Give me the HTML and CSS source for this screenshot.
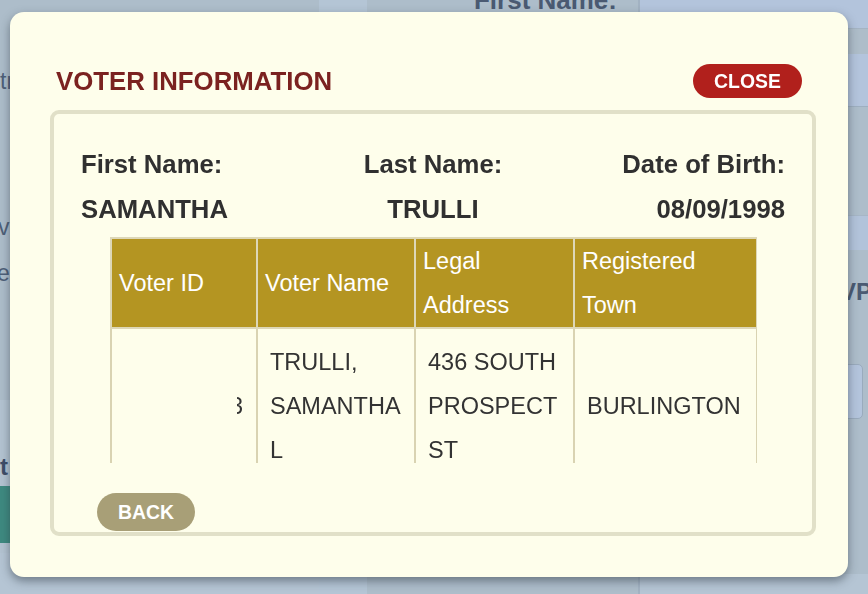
FILE: index.html
```html
<!DOCTYPE html>
<html lang="en">
<head>
<meta charset="utf-8">
<title>Voter Information</title>
<link rel="stylesheet" href="styles.css">
</head>
<body>
<div class="page">
  <div class="col col-a">
    <div class="a-top">
      <p class="bg-text t1">tr</p>
      <p class="bg-text t2">vi</p>
      <p class="bg-text t3">e</p>
    </div>
    <div class="a-band">
      <p class="bg-bold">t</p>
      <div class="teal"></div>
    </div>
    <div class="a-bottom"></div>
  </div>
  <div class="col col-b"></div>
  <div class="col col-c">
    <p class="bg-head">First Name:</p>
  </div>
  <div class="col col-d"></div>
  <div class="col col-e">
    <div class="e1"></div>
    <div class="e2"></div>
    <div class="e3"></div>
    <div class="e4"></div>
    <div class="e5"></div>
    <div class="e6"><span class="bg-bold-r">VP</span></div>
    <div class="e7"></div>
    <div class="e8"></div>
    <div class="e9"></div>
  </div>
</div>

<div class="modal">
  <div class="modal-head">
    <h1 class="modal-title">VOTER INFORMATION</h1>
    <button class="btn btn-close">CLOSE</button>
  </div>
  <div class="panel">
    <div class="info">
      <div class="lbl left">First Name:</div>
      <div class="lbl mid">Last Name:</div>
      <div class="lbl right">Date of Birth:</div>
      <div class="lbl left">SAMANTHA</div>
      <div class="lbl mid">TRULLI</div>
      <div class="lbl right">08/09/1998</div>
    </div>
    <div class="table-wrap">
      <table class="voters">
        <colgroup>
          <col class="c1"><col class="c2"><col class="c3"><col class="c4">
        </colgroup>
        <thead>
          <tr>
            <th>Voter ID</th>
            <th>Voter Name</th>
            <th>Legal<br>Address</th>
            <th>Registered<br>Town</th>
          </tr>
        </thead>
        <tbody>
          <tr>
            <td class="id"><span class="vid">3</span></td>
            <td>TRULLI,<br>SAMANTHA<br>L</td>
            <td>436 SOUTH<br>PROSPECT<br>ST</td>
            <td>BURLINGTON</td>
          </tr>
        </tbody>
      </table>
    </div>
    <button class="btn btn-back">BACK</button>
  </div>
</div>
</body>
</html>
```

FILE: styles.css
```css
html, body {
  margin: 0;
  padding: 0;
  width: 868px;
  height: 594px;
  overflow: hidden;
  font-family: "Liberation Sans", Arial, sans-serif;
}

/* ---------- background page ---------- */
.page {
  display: flex;
  width: 868px;
  height: 594px;
  background: #adbdca;
}
.col { height: 594px; overflow: hidden; }
.col-a { width: 319px; display: flex; flex-direction: column; }
.col-b { width: 48px; background: #b4c5d5; }
.col-c { width: 271px; }
.col-d { width: 2px; background: #a2b2c2; }
.col-e { flex: 1; display: flex; flex-direction: column; }

.a-top { height: 400px; }
.bg-text {
  margin: 0;
  font-size: 23px;
  line-height: 26px;
  color: #4e5f78;
  white-space: nowrap;
}
.t1 { margin-top: 68px; }
.t2 { margin-top: 120px; margin-left: -2px; }
.t3 { margin-top: 20px; margin-left: -3px; }

.a-band {
  height: 153px;
  background: #b3c3d1;
  display: flex;
  flex-direction: column;
}
.bg-bold {
  margin: 52px 0 0 0;
  font-size: 24px;
  font-weight: bold;
  line-height: 30px;
  color: #3e4d68;
}
.teal { height: 57px; margin-top: 4px; background: #3e8a80; }
.a-bottom { flex: 1; background: #b5c5d4; }

.bg-head {
  margin: -15px 21px 0 0;
  text-align: right;
  font-size: 26px;
  font-weight: bold;
  line-height: 30px;
  color: #4a5a72;
}

.e1 { height: 28px; background: #b3c4dc; }
.e2 { height: 25px; background: #aebdc9; border-top: 1px solid #a5b4c3; }
.e3 { height: 52px; background: #b3c4dc; }
.e4 { height: 108px; background: #adbdca; border-top: 1px solid #9eafc0; }
.e5 { height: 34px; background: #b2c3da; border-top: 1px solid #a6b6c6; }
.e6 {
  height: 114px;
  background: #adbdca;
  display: flex;
  justify-content: flex-end;
  align-items: flex-start;
}
.bg-bold-r {
  margin-top: 27px;
  margin-right: -4px;
  font-size: 24px;
  font-weight: bold;
  line-height: 30px;
  color: #4a5a72;
}
.e7 {
  height: 53px;
  margin-right: 5px;
  background: #b3c4dc;
  border: 1px solid #9aabbd;
  border-radius: 5px;
}
.e8 { height: 155px; }
.e9 { flex: 1; background: #b5c5d4; }

/* ---------- modal ---------- */
.modal {
  position: fixed;
  left: 10px;
  top: 12px;
  width: 838px;
  height: 565px;
  box-sizing: border-box;
  padding: 52px 32px 0 40px;
  background: #fefeeb;
  border-radius: 14px;
  box-shadow: 0 4px 10px rgba(40, 50, 60, 0.5);
  display: flex;
  flex-direction: column;
}
.modal-head {
  display: flex;
  justify-content: space-between;
  align-items: center;
  height: 34px;
  margin: 0 14px 12px 6px;
}
.modal-title {
  margin: 0;
  font-size: 25.8px;
  font-weight: bold;
  color: #7b2220;
  line-height: 30px;
}
.btn {
  border: none;
  border-radius: 20px;
  color: #ffffff;
  font-family: "Liberation Sans", Arial, sans-serif;
  font-weight: bold;
  font-size: 19.4px;
  padding: 0;
  cursor: pointer;
}
.btn-close {
  width: 109px;
  height: 34px;
  background: #b1201c;
  border-radius: 17px;
}

.panel {
  border: 4px solid #e1e0c8;
  border-radius: 9px;
  padding: 28px 27px 1px 27px;
  display: flex;
  flex-direction: column;
}
.info {
  display: grid;
  grid-template-columns: 1fr 1fr 1fr;
}
.lbl {
  font-size: 25.7px;
  font-weight: bold;
  line-height: 45px;
  color: #303030;
  white-space: nowrap;
}
.left { text-align: left; }
.mid { text-align: center; }
.right { text-align: right; }

.table-wrap {
  margin: 4px 28px 0 28px;
  padding: 1px 1px 0 1px;
  height: 226px;
  overflow: hidden;
}
.voters {
  width: 646px;
  table-layout: fixed;
  border-collapse: collapse;
  font-size: 23.5px;
  line-height: 44px;
}
.c1 { width: 146px; }
.c2 { width: 158px; }
.c3 { width: 159px; }
.c4 { width: 183px; }
.voters th {
  background: #b49522;
  color: #ffffff;
  font-weight: normal;
  text-align: left;
  vertical-align: middle;
  padding: 0 8px 0 7px;
  border: 2px solid #ddd7b8;
}
.voters td {
  color: #333333;
  vertical-align: middle;
  padding: 11px 12px;
  border: 2px solid #d9d3b2;
  border-top-color: #e0dbbf;
  white-space: nowrap;
}
.voters td.id {
  text-align: right;
  padding-right: 13px;
}
.vid {
  display: inline-block;
  vertical-align: top;
  width: 6px;
  height: 44px;
  overflow: hidden;
  direction: rtl;
}

.btn-back {
  align-self: flex-start;
  margin: 30px 0 0 16px;
  width: 98px;
  height: 38px;
  border-radius: 19px;
  background: #a89f77;
}
```
